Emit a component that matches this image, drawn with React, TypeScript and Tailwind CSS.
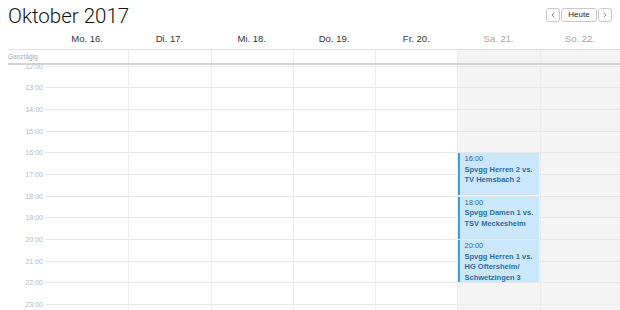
import { ChevronLeft, ChevronRight } from 'lucide-react';

const DAYS = [
  { label: 'Mo. 16.', weekend: false },
  { label: 'Di. 17.', weekend: false },
  { label: 'Mi. 18.', weekend: false },
  { label: 'Do. 19.', weekend: false },
  { label: 'Fr. 20.', weekend: false },
  { label: 'Sa. 21.', weekend: true },
  { label: 'So. 22.', weekend: true },
];

const HOURS = [12, 13, 14, 15, 16, 17, 18, 19, 20, 21, 22, 23];
const HOUR_H = 21.7;

const EVENTS = [
  { start: 16, time: '16:00', title: 'Spvgg Herren 2 vs. TV Hemsbach 2' },
  { start: 18, time: '18:00', title: 'Spvgg Damen 1 vs. TSV Meckesheim' },
  { start: 20, time: '20:00', title: 'Spvgg Herren 1 vs. HG Oftersheim/ Schwetzingen 3' },
];

const COLS = 'grid grid-cols-[46px_repeat(6,82.3px)_1fr]';

export default function App() {
  return (
    <div className="w-[620px] h-[310px] overflow-hidden bg-white font-['Liberation_Sans',Arial,sans-serif] flex flex-col">
      <div className="h-[32px] flex items-start justify-between pl-[8px] pr-[8px] shrink-0">
        <h1 className="font-['Roboto',sans-serif] font-light text-[20.5px] leading-[22px] mt-[5px] text-[#111]">
          Oktober 2017
        </h1>
        <div className="flex gap-[1px] mt-[8px]">
          <button className="w-[14px] h-[14px] border border-[#c9c9c9] rounded-[3px] bg-white flex items-center justify-center text-[#555]">
            <ChevronLeft size={8} strokeWidth={2} />
          </button>
          <button className="w-[36px] h-[14px] border border-[#c9c9c9] rounded-[3px] bg-white text-[8px] leading-[12px] text-[#222]">
            Heute
          </button>
          <button className="w-[14px] h-[14px] border border-[#c9c9c9] rounded-[3px] bg-white flex items-center justify-center text-[#555]">
            <ChevronRight size={8} strokeWidth={2} />
          </button>
        </div>
      </div>

      <div className={`${COLS} h-[17px] shrink-0`}>
        <div />
        {DAYS.map((d) => (
          <div
            key={d.label}
            className={`text-center text-[9.5px] leading-[14px] ${d.weekend ? 'text-[#a3a3a3]' : 'text-[#333]'}`}
          >
            {d.label}
          </div>
        ))}
      </div>

      <div className="ml-[8px] border-t border-[#e2e2e2] border-b-2 border-b-[#d3d3d3] shrink-0">
        <div className="grid grid-cols-[38px_repeat(6,82.3px)_1fr] h-[13px]">
          <div className="text-[6.5px] leading-[13px] text-[#a8a8a8]">Ganztägig</div>
          {DAYS.map((d, i) => (
            <div
              key={d.label}
              className={`${i > 0 ? 'border-l border-[#ececec]' : ''} ${d.weekend ? 'bg-[#f4f4f4]' : ''}`}
            />
          ))}
        </div>
      </div>

      <div className={`${COLS} flex-1 overflow-hidden`}>
        <div className="flex flex-col pt-[0.6px]">
          {HOURS.map((h) => (
            <div key={h} className="relative shrink-0" style={{ height: HOUR_H }}>
              <span className="absolute right-[3px] top-0 -translate-y-1/2 text-[7px] leading-[9px] text-[#b8b8b8]">
                {h}:00
              </span>
              <div className="absolute right-0 top-0 w-[1px] border-t border-[#ececec]" />
            </div>
          ))}
        </div>
        {DAYS.map((d, i) => (
          <div
            key={d.label}
            className={`relative flex flex-col pt-[0.6px] ${i > 0 ? 'border-l border-[#ececec]' : ''} ${d.weekend ? 'bg-[#f4f4f4]' : ''}`}
          >
            {HOURS.map((h) => (
              <div key={h} className="shrink-0 border-t border-[#e8e8e8]" style={{ height: HOUR_H }} />
            ))}
            {i === 5 &&
              EVENTS.map((e) => (
                <div
                  key={e.time}
                  className="absolute left-0 right-[1px] bg-[#cbe7fb] border-l-2 border-[#3b9fe6] pl-[4px] pr-[2px] pt-[1px] text-[7.5px] leading-[10.5px] text-[#2e6ea6]"
                  style={{ top: 0.6 + (e.start - 12) * HOUR_H + 1, height: HOUR_H * 2 - 1.5 }}
                >
                  <div>{e.time}</div>
                  <div className="font-bold">{e.title}</div>
                </div>
              ))}
          </div>
        ))}
      </div>
    </div>
  );
}
